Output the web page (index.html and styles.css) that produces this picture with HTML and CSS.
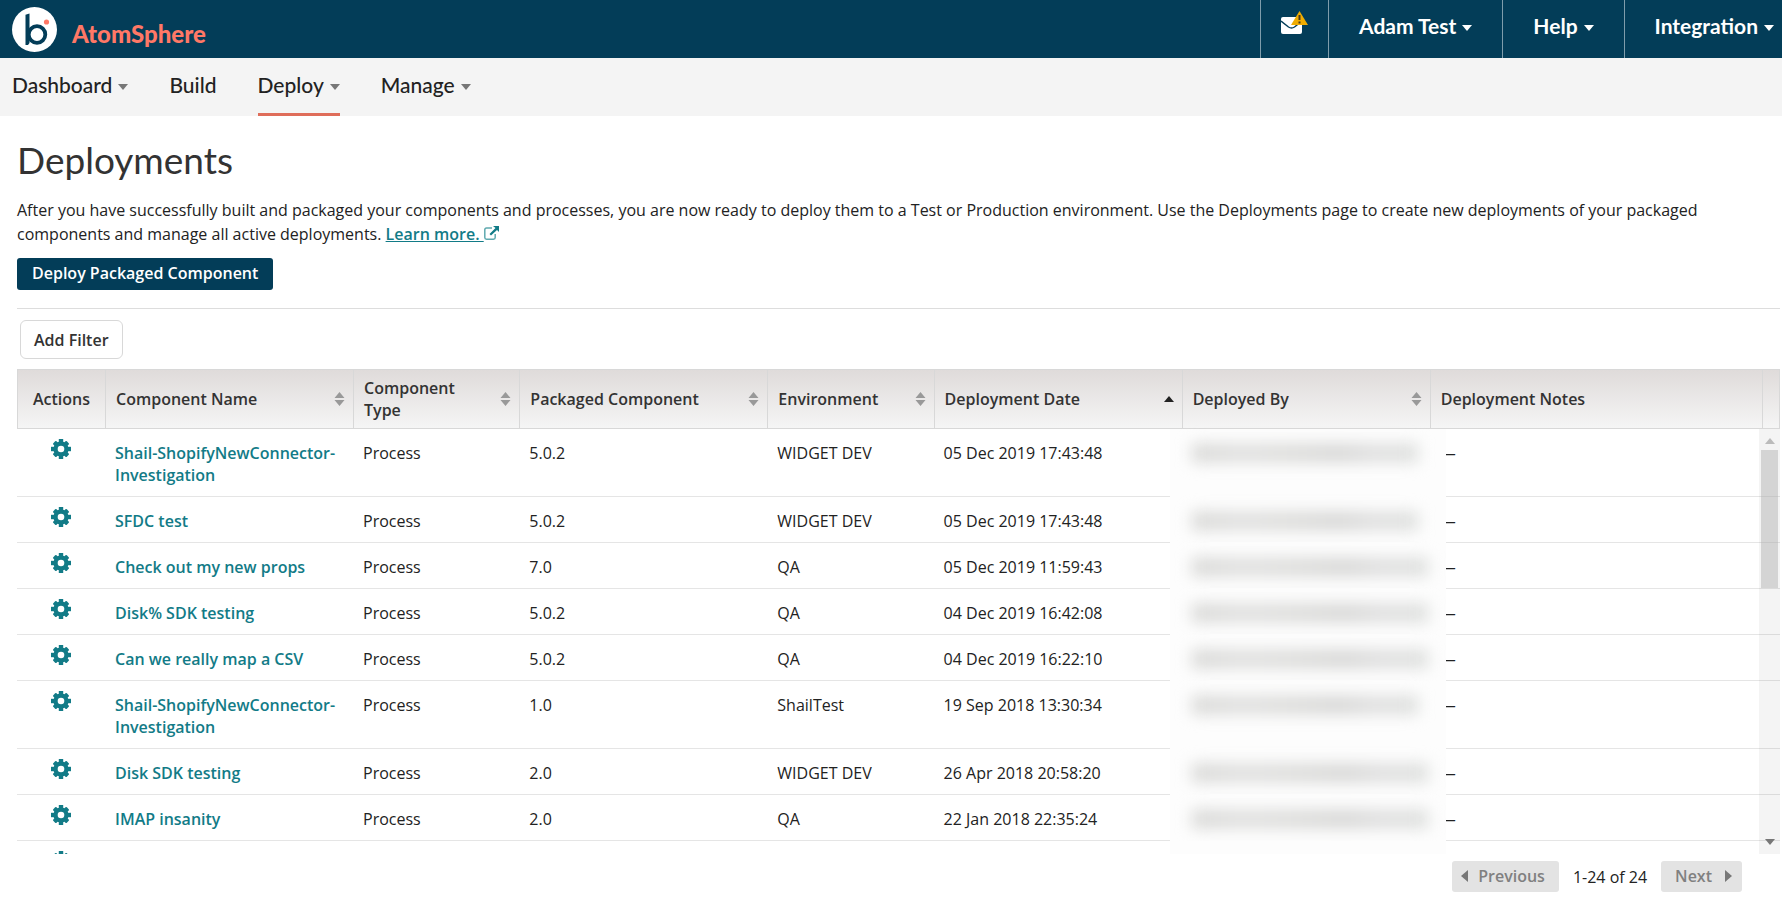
FILE: index.html
```html
<!DOCTYPE html>
<html lang="en">
<head>
<meta charset="utf-8">
<title>Deployments</title>
<link rel="stylesheet" href="styles.css">
</head>
<body>
<svg class="symbols" aria-hidden="true">
  <symbol id="gear" viewBox="0 0 20 20">
    <g fill="currentColor">
      <circle cx="10" cy="10" r="7.600"/>
      <rect x="7.800" y="0" width="4.400" height="20"/>
      <rect x="0" y="7.800" width="20" height="4.400"/>
      <rect x="7.700" y="0.400" width="4.600" height="19.200" rx="1" transform="rotate(45 10 10)"/>
      <rect x="7.700" y="0.400" width="4.600" height="19.200" rx="1" transform="rotate(-45 10 10)"/>
    </g>
    <circle cx="10" cy="10" r="3.300" fill="#fff"/>
  </symbol>
  <symbol id="sort" viewBox="0 0 11 14">
    <path fill="currentColor" d="M5.500 0L10.500 6H.500zM.500 8h10l-5 6z"/>
  </symbol>
  <symbol id="down" viewBox="0 0 10 6"><path fill="currentColor" d="M0 0h10L5 6z"/></symbol>
  <symbol id="up" viewBox="0 0 10 6"><path fill="currentColor" d="M0 6h10L5 0z"/></symbol>
</svg>

<header class="topbar">
  <a class="brand" href="#">
    <svg class="brand-logo" viewBox="0 0 45 45" aria-hidden="true">
      <circle cx="22.500" cy="22.500" r="22.500" fill="#fff"/>
      <circle cx="25" cy="27.500" r="8.300" fill="none" stroke="#033d58" stroke-width="3.800"/>
      <path d="M13.500 7.800l4-1.300v29.500l-1.500 2h-2.500z" fill="#033d58"/>
      <circle cx="34.500" cy="15" r="2.600" fill="#ff7866"/>
    </svg>
    <span class="brand-name">AtomSphere</span>
  </a>
  <nav class="account" aria-label="Account">
    <button class="account-item messages" type="button" aria-label="Messages">
      <svg width="27" height="24" viewBox="0 0 27 24" aria-hidden="true">
        <rect x="0" y="6" width="21" height="17" rx="2" fill="#fff"/>
        <path d="M0 10l7.500 6q3 2 6 0L21 10" fill="none" stroke="#033d58" stroke-width="1.500"/>
        <path d="M18.500 0L27 14H10z" fill="#f0ac00"/>
        <path d="M17.500 4h2v5h-2zM17.500 10.500h2v2h-2z" fill="#493a1e"/>
      </svg>
    </button>
    <button class="account-item" type="button">Adam Test <svg class="caret"><use href="#down"/></svg></button>
    <button class="account-item" type="button">Help <svg class="caret"><use href="#down"/></svg></button>
    <button class="account-item last" type="button">Integration <svg class="caret"><use href="#down"/></svg></button>
  </nav>
</header>

<nav class="tabs" aria-label="Main">
  <a class="tab" href="#">Dashboard <svg class="caret"><use href="#down"/></svg></a>
  <a class="tab" href="#">Build</a>
  <a class="tab active" href="#" aria-current="page">Deploy <svg class="caret"><use href="#down"/></svg></a>
  <a class="tab" href="#">Manage <svg class="caret"><use href="#down"/></svg></a>
</nav>

<main class="page">
  <section class="intro">
    <h1 class="title">Deployments</h1>
    <p class="lead">After you have successfully built and packaged your components and processes, you are now ready to deploy them to a Test or Production environment. Use the Deployments page to create new deployments of your packaged components and manage all active deployments. <a class="more" href="#">Learn more. </a><svg class="external" viewBox="0 0 15 14" aria-hidden="true"><path d="M8 2H2.500Q.800 2 .800 3.700V11.500Q.800 13.200 2.500 13.200H9.500Q11.200 13.200 11.200 11.500V8" fill="none" stroke="#5fa9af" stroke-width="1.500"/><path d="M9 0h6v6l-2-2-6 5.500L5.500 8l6-6z" fill="#127b87"/></svg></p>
    <button class="primary" type="button">Deploy Packaged Component</button>
  </section>
  <div class="filters"><button class="filter" type="button">Add Filter</button></div>

  <div class="grid">
    <table class="deployments">
      <colgroup><col class="c-act"><col class="c-wide"><col class="c-slim"><col class="c-wide"><col class="c-slim"><col class="c-wide"><col class="c-wide"><col><col class="c-bar"></colgroup>
      <thead>
        <tr>
          <th class="act">Actions</th>
          <th><div class="head">Component Name <svg class="sort"><use href="#sort"/></svg></div></th>
          <th><div class="head">Component Type <svg class="sort"><use href="#sort"/></svg></div></th>
          <th><div class="head">Packaged Component <svg class="sort"><use href="#sort"/></svg></div></th>
          <th><div class="head">Environment <svg class="sort"><use href="#sort"/></svg></div></th>
          <th aria-sort="ascending"><div class="head">Deployment Date <svg class="sorted"><use href="#up"/></svg></div></th>
          <th><div class="head">Deployed By <svg class="sort"><use href="#sort"/></svg></div></th>
          <th>Deployment Notes</th>
          <th></th>
        </tr>
      </thead>
      <tbody id="rows"></tbody>
    </table>
    <div class="scrollbar" aria-hidden="true">
      <svg class="arrow top"><use href="#up"/></svg>
      <div class="thumb"></div>
      <svg class="arrow bottom"><use href="#down"/></svg>
    </div>
  </div>

  <footer class="pager">
    <button class="page-btn" type="button" disabled><svg width="7" height="12" viewBox="0 0 7 12"><path d="M7 0v12L0 6z" fill="#777"/></svg>Previous</button>
    <span>1-24 of 24</span>
    <button class="page-btn next" type="button" disabled>Next<svg width="7" height="12" viewBox="0 0 7 12"><path d="M0 0v12L7 6z" fill="#777"/></svg></button>
  </footer>
</main>
<script src="rows.js"></script>
</body>
</html>
```
FILE: rows.js
```js
const rows = [
  ["Shail-ShopifyNewConnector-Investigation", "5.0.2", "WIDGET DEV", "05 Dec 2019 17:43:48", "short"],
  ["SFDC test", "5.0.2", "WIDGET DEV", "05 Dec 2019 17:43:48", "short"],
  ["Check out my new props", "7.0", "QA", "05 Dec 2019 11:59:43", ""],
  ["Disk% SDK testing", "5.0.2", "QA", "04 Dec 2019 16:42:08", ""],
  ["Can we really map a CSV", "5.0.2", "QA", "04 Dec 2019 16:22:10", ""],
  ["Shail-ShopifyNewConnector-Investigation", "1.0", "ShailTest", "19 Sep 2018 13:30:34", "short"],
  ["Disk SDK testing", "2.0", "WIDGET DEV", "26 Apr 2018 20:58:20", ""],
  ["IMAP insanity", "2.0", "QA", "22 Jan 2018 22:35:24", ""],
  ["", "", "", "", "none"]
];
document.getElementById("rows").innerHTML = rows.map(([name, version, env, date, user]) => `
  <tr>
    <td class="act"><button class="gear" type="button" aria-label="Actions"><svg><use href="#gear"/></svg></button></td>
    <td><a class="name" href="#">${name}</a></td>
    <td>${name && "Process"}</td>
    <td>${version}</td>
    <td>${env}</td>
    <td>${date}</td>
    <td class="user"><div class="redacted ${user}"></div></td>
    <td>${name && "—"}</td>
    <td></td>
  </tr>`).join("");
```
FILE: styles.css
```css
* { box-sizing: border-box; }
body {
  margin: 0;
  height: 100vh;
  display: flex;
  flex-direction: column;
  overflow: hidden;
  background: #fff;
  color: #222;
  font: 16px/22px "Open Sans", "Noto Sans", sans-serif;
}
button { font: inherit; cursor: pointer; }
.symbols { position: absolute; width: 0; height: 0; }
.caret { width: 10px; height: 6px; }

.topbar {
  display: flex;
  justify-content: space-between;
  flex: none;
  height: 58px;
  padding-left: 12px;
  background: #033d58;
}
.brand { display: flex; gap: 15px; align-items: center; text-decoration: none; }
.brand-logo { width: 45px; height: 45px; }
.brand-name { padding-top: 10px; color: #ff7866; font: 900 24px/24px Lato, sans-serif; }
.account { display: flex; }
.account-item {
  display: flex;
  align-items: center;
  gap: 6px;
  padding: 0 30px 6px;
  border: 0;
  border-left: 1px solid #7f9dab;
  background: none;
  color: #fff;
  font: 700 21px/24px Lato, sans-serif;
}
.account-item .caret { margin-top: 4px; }
.account-item.messages { padding: 0 20px 12px; }
.account-item.last { padding-right: 8px; }

.tabs {
  display: flex;
  flex: none;
  gap: 41px;
  height: 58px;
  padding-left: 12px;
  background: #f4f4f4;
}
.tab {
  display: flex;
  align-items: center;
  gap: 6px;
  padding: 3px 0 4px;
  border-bottom: 3px solid transparent;
  color: #222;
  text-decoration: none;
  font: 500 21px/24px Lato, sans-serif;
}
.tab .caret { margin-top: 3px; color: #777; }
.active { border-bottom-color: #df6d5a; }

.page { display: flex; flex-direction: column; flex: 1; min-height: 0; padding: 0 2px 6px 17px; }
.intro { padding: 22px 0 18px; border-bottom: 1px solid #ddd; }
.title { margin: 0; color: #333; font: 400 37px/44px Lato, sans-serif; }
.lead { margin: 16px 40px 12px 0; line-height: 24px; }
.more { color: #127b87; font-weight: 600; white-space: pre; }
.external { width: 15px; height: 14px; }
.primary {
  display: block;
  padding: 4px 15px 6px;
  border: 0;
  border-radius: 3px;
  background: #033d58;
  color: #fff;
  font-weight: 600;
}
.filters { padding: 11px 3px 10px; }
.filter {
  display: block;
  padding: 8px 13px 7px;
  border: 1px solid #d8d8d8;
  border-radius: 6px;
  background: #fff;
  color: #333;
  font-weight: 600;
}

.grid { position: relative; flex: 1; min-height: 0; overflow: hidden; }
.deployments { width: 100%; table-layout: fixed; border-collapse: separate; border-spacing: 0; }
.c-act { width: 88px; }
.c-wide { width: 14.07%; }
.c-slim { width: 9.43%; }
.c-bar { width: 18px; }
th {
  height: 60px;
  padding: 7px 8px 7px 10px;
  border: 1px solid #d8d8d8;
  border-right: 0;
  background: linear-gradient(#dfdbda, #f5f5f5);
  color: #333;
  font-weight: 600;
  text-align: left;
}
th:last-child { padding: 0; border-right: 1px solid #d8d8d8; }
.head { display: flex; align-items: center; justify-content: space-between; gap: 18px; }
.sort { flex: none; width: 11px; height: 14px; color: #999; }
.sorted { flex: none; width: 10px; height: 6px; color: #222; }
td {
  height: 46px;
  padding: 13px 10px 10px;
  border-bottom: 1px solid #e5e5e5;
  vertical-align: top;
}
th.act { padding: 7px 0; text-align: center; }
td.act { padding: 10px 0 0; text-align: center; }
.gear { display: block; width: 20px; height: 20px; margin: 0 auto; padding: 0; border: 0; background: none; color: #127b87; }
.gear svg { display: block; width: 20px; height: 20px; }
.name { color: #127b87; font-weight: 600; text-decoration: none; }
td.user { position: relative; z-index: 1; padding-right: 0; border-bottom-color: transparent; }
td.user::before {
  content: "";
  position: absolute;
  top: 0;
  right: -16px;
  bottom: -1px;
  left: -12px;
  background: #fdfdfd;
}
.redacted {
  position: relative;
  width: 236px;
  height: 18px;
  margin-top: 2px;
  background: linear-gradient(90deg, #d6d6d4, #dededd 22%, #dadad8 45%, #d5d5d4 65%, #dedede 82%, #dbdddb);
  filter: blur(8px);
}
.redacted.short { width: 226px; }
.redacted.none { visibility: hidden; }

.scrollbar {
  position: absolute;
  top: 60px;
  right: 0;
  bottom: 0;
  display: flex;
  flex-direction: column;
  align-items: center;
  width: 21px;
  padding: 9px 2px;
  background: rgba(0, 0, 0, 0.045);
}
.thumb { width: 17px; height: 34%; margin-top: 6px; background: rgba(180, 180, 180, 0.5); }
.arrow { width: 10px; height: 6px; }
.arrow.top { color: #bbb; }
.arrow.bottom { margin-top: auto; color: #777; }

.pager { display: flex; align-items: center; justify-content: flex-end; gap: 14px; padding: 7px 38px 0 0; }
.page-btn {
  display: flex;
  align-items: center;
  gap: 10px;
  padding: 4px 14px 5px 9px;
  border: 0;
  border-radius: 3px;
  background: #e3e3e3;
  color: #808080;
  font-weight: 600;
}
.page-btn.next { gap: 13px; padding: 4px 10px 5px 14px; }
```
